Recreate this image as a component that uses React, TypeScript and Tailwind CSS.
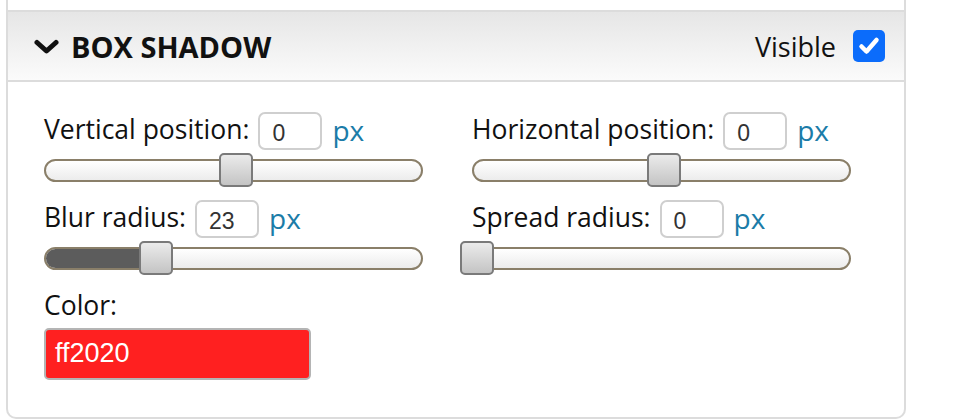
import React from 'react';

interface SliderProps {
  thumbLeft: number;
  range?: boolean;
}

const Slider: React.FC<SliderProps> = ({ thumbLeft, range }) => {
  return (
    <div className="relative mt-[9px] h-[23px] w-[379px] rounded-full border-2 border-[#8a7f69] bg-gradient-to-b from-white to-[#ececec]">
      {range && (
        <div
          className="absolute left-0 top-0 h-full rounded-l-full bg-[#5c5c5c]"
          style={{ width: thumbLeft + 15 }}
        />
      )}
      <div
        className="absolute top-[-8px] h-[34px] w-[34px] rounded-[5px] border-2 border-[#7a7a7a] bg-gradient-to-b from-[#ebebeb] to-[#c4c4c4]"
        style={{ left: thumbLeft - 2 }}
      />
    </div>
  );
};

interface FieldProps {
  label: string;
  value: string;
  thumbLeft: number;
  range?: boolean;
}

const Field: React.FC<FieldProps> = ({ label, value, thumbLeft, range }) => {
  return (
    <div>
      <div className="flex h-[38px] items-center">
        <span className="mb-[4px] text-[26.5px] leading-none text-[#111]">{label}</span>
        <div className="ml-[9px] flex h-[38px] w-[64px] items-center rounded-[7px] border-2 border-[#cfcfcf] pl-[12px] pt-[4px] font-['Liberation_Sans',Arial,sans-serif] text-[23px] text-[#333]">
          {value}
        </div>
        <span className="mb-[3px] ml-[10px] text-[28px] leading-none text-[#1b7ca8]">px</span>
      </div>
      <Slider thumbLeft={thumbLeft} range={range} />
    </div>
  );
};

export default function App() {
  return (
    <div className="h-[420px] w-[968px] bg-white font-['Open_Sans','Noto_Sans',sans-serif]">
      <div className="ml-[6px] w-[900px] rounded-b-[10px] border-x-2 border-b-2 border-[#dcdcdc]">
        <div className="h-[10px]" />

        {/* header */}
        <div className="flex h-[72px] items-center justify-between border-y-2 border-[#dcdcdc] bg-gradient-to-b from-[#e6e6e6] to-[#fbfbfb] pl-[26px] pr-[19px]">
          <div className="flex items-center">
            <svg width="25" height="16" viewBox="0 0 25 16" className="mt-[1px]">
              <path d="M3 3.5 L12.5 12 L22 3.5" fill="none" stroke="#111" strokeWidth="5" strokeLinecap="round" strokeLinejoin="round" />
            </svg>
            <span className="ml-[12px] text-[29px] font-bold leading-none text-[#111]">BOX SHADOW</span>
          </div>
          <div className="flex items-center">
            <span className="text-[27px] leading-none text-[#111]">Visible</span>
            <div className="ml-[17px] flex h-[32px] w-[32px] items-center justify-center rounded-[5px] bg-[#0b6cfb]">
              <svg width="22" height="20" viewBox="0 0 22 20">
                <path d="M3.5 10.5 L8.5 15.5 L18.5 4" fill="none" stroke="#fff" strokeWidth="4.5" strokeLinecap="round" strokeLinejoin="round" />
              </svg>
            </div>
          </div>
        </div>

        {/* body */}
        <div className="pb-[37px] pl-[36px] pt-[30px]">
          <div className="grid grid-cols-[428px_380px] gap-y-[18px]">
            <Field label="Vertical position:" value="0" thumbLeft={175} />
            <Field label="Horizontal position:" value="0" thumbLeft={175} />
            <Field label="Blur radius:" value="23" thumbLeft={95} range />
            <Field label="Spread radius:" value="0" thumbLeft={-12} />
          </div>
          <div className="mt-[22px] text-[26.5px] leading-none text-[#111]">Color:</div>
          <div className="mt-[9px] flex h-[52px] w-[267px] items-center rounded-[5px] border-2 border-[#b4b4b4] bg-[#ff2020] pl-[9px] font-['Liberation_Sans',Arial,sans-serif] text-[27px] text-white">
            ff2020
          </div>
        </div>
      </div>
    </div>
  );
}
